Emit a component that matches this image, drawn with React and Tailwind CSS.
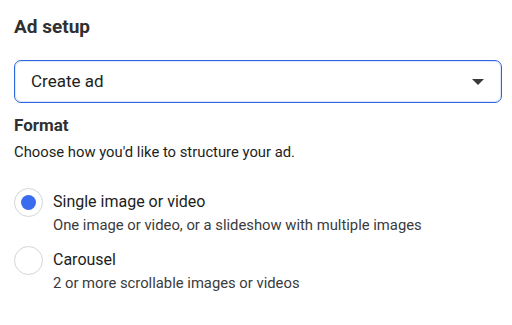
import { useState } from 'react';

const formats = [
  {
    value: 'single',
    title: 'Single image or video',
    description: 'One image or video, or a slideshow with multiple images',
  },
  {
    value: 'carousel',
    title: 'Carousel',
    description: '2 or more scrollable images or videos',
  },
];

const Radio = ({ checked }) => (
  <span className="flex h-[29px] w-[29px] shrink-0 items-center justify-center rounded-full border border-[#d3d5d9] bg-white">
    {checked && <span className="h-[15px] w-[15px] rounded-full bg-[#3b6cf0]" />}
  </span>
);

export default function App() {
  const [format, setFormat] = useState('single');

  return (
    <div className="h-[325px] w-[512px] bg-white pl-[14px] pr-[10px] pt-[15px] text-[#1c1e21] font-['Roboto',sans-serif]">
      <h2 className="text-[19px] font-bold leading-[24px] text-[#303030]">Ad setup</h2>

      <button className="mt-[21px] flex h-[43px] w-full items-center justify-between rounded-[7px] border border-[#2c67e0] pl-[16px] pr-[17px] shadow-[inset_0_0_0_1px_#dfe8fb]">
        <span className="text-[17px] text-[#1c1e21]">Create ad</span>
        <svg width="12" height="6" viewBox="0 0 12 6">
          <path d="M0 0h12L6 6z" fill="#3a3a3a" />
        </svg>
      </button>

      <h3 className="mt-[11px] text-[17px] font-bold leading-[22px] text-[#303030]">Format</h3>
      <p className="mt-[6px] text-[14.8px] leading-[20px] text-[#1c1e21]">
        Choose how you'd like to structure your ad.
      </p>

      <div className="mt-[26px] flex flex-col gap-[12px]">
        {formats.map((item) => (
          <label
            key={item.value}
            className="flex cursor-pointer items-start gap-[10px]"
            onClick={() => setFormat(item.value)}
          >
            <Radio checked={format === item.value} />
            <span className="flex flex-col pt-[4px]">
              <span className="text-[16px] leading-[20px] text-[#1c1e21]">{item.title}</span>
              <span className="mt-[4px] text-[14.8px] leading-[18px] text-[#3a3b3c]">
                {item.description}
              </span>
            </span>
          </label>
        ))}
      </div>
    </div>
  );
}
